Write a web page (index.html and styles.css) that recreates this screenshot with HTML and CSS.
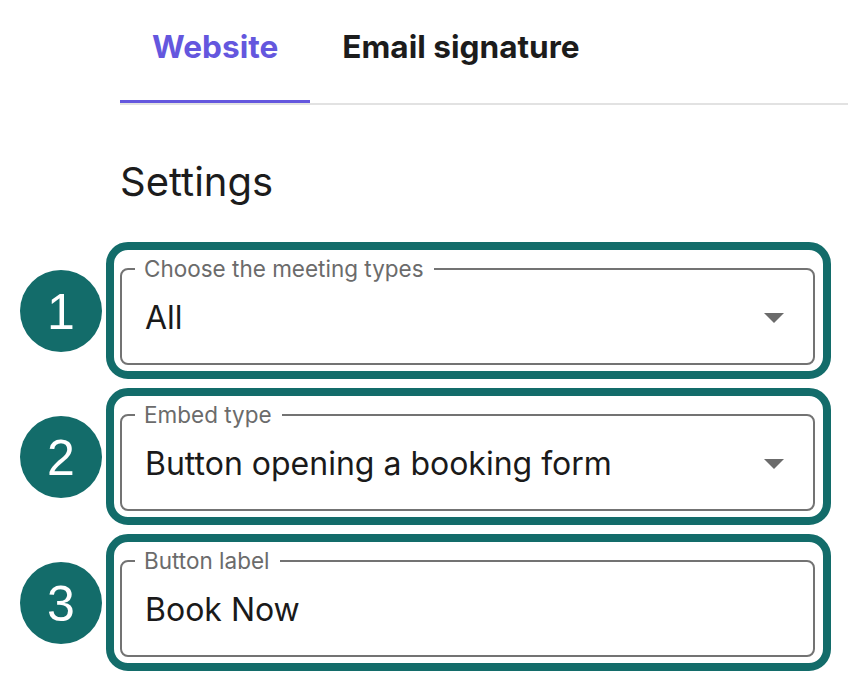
FILE: index.html
```html
<!DOCTYPE html>
<html>
<head>
<meta charset="utf-8">
<link rel="stylesheet" href="styles.css">
</head>
<body>
<div class="tabs">
  <div class="tab active">Website</div>
  <div class="tab">Email signature</div>
</div>
<h2 class="heading">Settings</h2>
<div class="rows">
  <div class="row">
    <div class="badge">1</div>
    <div class="box">
      <fieldset class="field">
        <legend class="label">Choose the meeting types</legend>
        <div class="value"><span>All</span><span class="arrow"></span></div>
      </fieldset>
    </div>
  </div>
  <div class="row">
    <div class="badge">2</div>
    <div class="box">
      <fieldset class="field">
        <legend class="label">Embed type</legend>
        <div class="value"><span>Button opening a booking form</span><span class="arrow"></span></div>
      </fieldset>
    </div>
  </div>
  <div class="row">
    <div class="badge">3</div>
    <div class="box">
      <fieldset class="field">
        <legend class="label">Button label</legend>
        <div class="value"><span>Book Now</span></div>
      </fieldset>
    </div>
  </div>
</div>
</body>
</html>
```

FILE: styles.css
```css
html, body {
  margin: 0;
  padding: 0;
  background: #ffffff;
}
body {
  font-family: Inter, "Liberation Sans", sans-serif;
  color: #1a1a1a;
  width: 848px;
  height: 690px;
  overflow: hidden;
}
.tabs {
  display: flex;
  margin-left: 120px;
  border-bottom: 2px solid #e2e2e2;
}
.tab {
  font-size: 31.6px;
  font-weight: 700;
  line-height: 40px;
  padding: 27px 32px 33px 32px;
  border-bottom: 3px solid transparent;
  color: #1c1c1c;
}
.tab.active {
  color: #6457de;
  border-bottom-color: #6457de;
}
.heading {
  margin: 53px 0 36px 120px;
  font-size: 40px;
  line-height: 48px;
  font-weight: 400;
  color: #1c1c1c;
}
.rows {
  display: flex;
  flex-direction: column;
  gap: 9px;
}
.row {
  display: flex;
  align-items: center;
}
.badge {
  width: 82px;
  height: 82px;
  box-sizing: border-box;
  padding-top: 3px;
  border-radius: 50%;
  background: #136c6a;
  color: #ffffff;
  margin-left: 20px;
  margin-right: 4px;
  display: flex;
  align-items: center;
  justify-content: center;
  font-family: "Liberation Sans", Arial, sans-serif;
  font-size: 50px;
  line-height: 1;
}
.box {
  width: 725px;
  box-sizing: border-box;
  border: 8px solid #136c6a;
  border-radius: 22px;
  padding: 6px 8px 6px 6px;
}
.field {
  margin: 0;
  padding: 0;
  border: 2px solid #737373;
  border-radius: 8px;
}
.label {
  margin-left: 13px;
  padding: 0 10px 0 9px;
  font-size: 22.5px;
  line-height: 26px;
  color: #6b6b6b;
}
.value {
  box-sizing: border-box;
  height: 81px;
  padding: 0 29px 10px 23px;
  display: flex;
  align-items: center;
  justify-content: space-between;
  font-size: 32px;
  color: #1a1a1a;
}
.arrow {
  width: 0;
  height: 0;
  border-left: 10px solid transparent;
  border-right: 10px solid transparent;
  border-top: 10px solid #6b6b6b;
}
```
